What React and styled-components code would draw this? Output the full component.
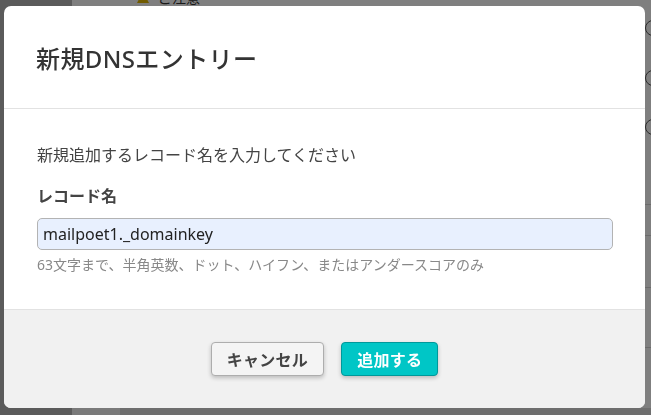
import React from 'react';
import styled, { createGlobalStyle } from 'styled-components';

const GlobalStyle = createGlobalStyle`
  html, body {
    margin: 0;
    padding: 0;
    width: 651px;
    height: 415px;
    overflow: hidden;
    font-family: "Noto Sans", "Noto Sans CJK JP", sans-serif;
  }
`;

const Page = styled.div`
  display: flex;
  width: 651px;
  height: 415px;
  background: #ffffff;
`;

const Sidebar = styled.div`
  width: 72px;
  background: #b6b6b6;
`;

const Main = styled.div`
  flex: 1;
  display: flex;
  flex-direction: column;
`;

const Notice = styled.div`
  display: flex;
  align-items: center;
  gap: 8px;
  height: 16px;
  margin-top: -11px;
  padding-left: 64px;
  font-size: 14px;
  color: #333;
`;

const ListRow = styled.div`
  height: ${(p) => p.h}px;
  border-bottom: 1px solid ${(p) => p.line || 'transparent'};
  display: flex;
  align-items: center;
  justify-content: flex-end;
`;

const RowIcon = styled.span`
  width: 14px;
  height: 14px;
  margin-right: -10px;
  border: 1.5px solid #555;
  border-radius: 50%;
`;

const Footer = styled.div`
  margin-top: auto;
  display: flex;
  height: 7px;
`;

const FooterChip = styled.div`
  width: 48px;
  background: #f4f4f4;
`;

const FooterRest = styled.div`
  flex: 1;
  background: #dcdcdc;
`;

const Overlay = styled.div`
  position: fixed;
  inset: 0;
  background: rgba(0, 0, 0, 0.5);
  display: flex;
  align-items: flex-start;
  padding: 6px 0 0 4px;
`;

const Dialog = styled.div`
  width: 641px;
  height: 402px;
  background: #ffffff;
  border-radius: 7px;
  overflow: hidden;
  display: flex;
  flex-direction: column;
`;

const Header = styled.div`
  height: 102px;
  border-bottom: 1px solid #e2e2e2;
  display: flex;
  align-items: center;
  padding: 0 32px;
`;

const Title = styled.h2`
  margin: 0;
  font-size: 24px;
  font-weight: 500;
  color: #333;
  letter-spacing: 0.4px;
`;

const Body = styled.div`
  flex: 1;
  padding: 34px 32px 0 33px;
  display: flex;
  flex-direction: column;
`;

const Description = styled.p`
  margin: 0;
  font-size: 16px;
  line-height: 24px;
  color: #444;
`;

const Label = styled.label`
  margin-top: 17px;
  font-size: 16px;
  line-height: 24px;
  font-weight: 700;
  color: #444;
`;

const Input = styled.input`
  margin-top: 10px;
  height: 32px;
  width: 576px;
  box-sizing: border-box;
  padding: 0 5px;
  border: 1px solid #b3b3b3;
  border-radius: 5px;
  background: #e8f0fe;
  font-family: "Noto Sans", "Noto Sans CJK JP", sans-serif;
  font-size: 16px;
  color: #222;
  outline: none;
`;

const Hint = styled.div`
  margin-top: 5px;
  font-size: 14px;
  line-height: 20px;
  color: #888;
`;

const Actions = styled.div`
  height: 99px;
  background: #f1f1f1;
  border-top: 1px solid #e2e2e2;
  display: flex;
  justify-content: center;
  align-items: center;
  gap: 17px;
  box-sizing: border-box;
`;

const Button = styled.button`
  height: 34px;
  padding: 0 ${(p) => p.pad}px;
  border-radius: 4px;
  font-family: "Noto Sans CJK JP", sans-serif;
  font-size: 16px;
  font-weight: 700;
  cursor: pointer;
  box-shadow: 0 2px 4px rgba(0, 0, 0, 0.22);
  background: ${(p) => (p.primary ? '#00c6c6' : '#f4f4f4')};
  border: 1px solid ${(p) => (p.primary ? '#00989a' : '#adadad')};
  color: ${(p) => (p.primary ? '#ffffff' : '#444')};
  letter-spacing: 0.3px;
`;

function WarnIcon() {
  return (
    <svg width="14" height="14" viewBox="0 0 14 14">
      <path d="M7 1 L13 13 L1 13 Z" fill="#e2b600" />
      <rect x="6.3" y="5" width="1.4" height="5" fill="#222" />
    </svg>
  );
}

export default function App() {
  return (
    <>
      <GlobalStyle />
      <Page>
        <Sidebar />
        <Main>
          <Notice>
            <WarnIcon />
            <span>ご注意</span>
          </Notice>
          <ListRow h={46}><RowIcon /></ListRow>
          <ListRow h={52}><RowIcon /></ListRow>
          <ListRow h={44}><RowIcon /></ListRow>
          <ListRow h={54} line="#d6d6d6" />
          <ListRow h={30} line="#d6d6d6" />
          <ListRow h={51} line="#d6d6d6" />
          <ListRow h={59} line="#d6d6d6" />
          <Footer>
            <FooterChip />
            <FooterRest />
          </Footer>
        </Main>
      </Page>
      <Overlay>
        <Dialog>
          <Header>
            <Title>新規DNSエントリー</Title>
          </Header>
          <Body>
            <Description>新規追加するレコード名を入力してください</Description>
            <Label htmlFor="record">レコード名</Label>
            <Input id="record" defaultValue="mailpoet1._domainkey" />
            <Hint>63文字まで、半角英数、ドット、ハイフン、またはアンダースコアのみ</Hint>
          </Body>
          <Actions>
            <Button pad={15}>キャンセル</Button>
            <Button primary pad={15}>追加する</Button>
          </Actions>
        </Dialog>
      </Overlay>
    </>
  );
}
